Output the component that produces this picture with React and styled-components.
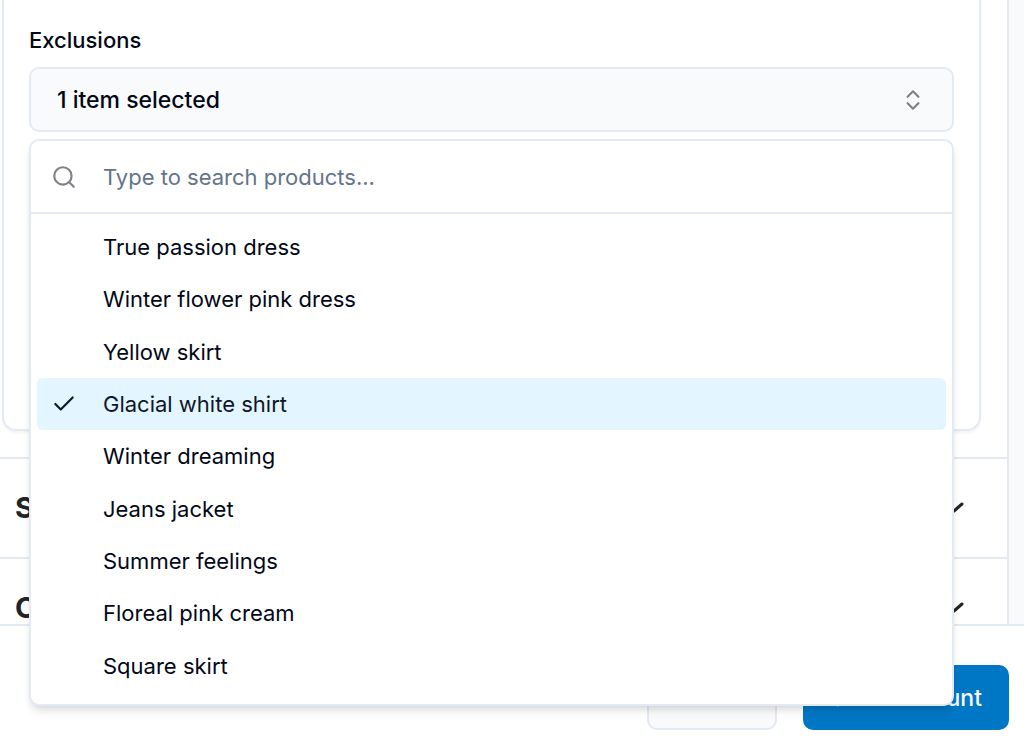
import React, { useState } from "react";
import styled, { createGlobalStyle } from "styled-components";
import { Check, ChevronsUpDown, Search } from "lucide-react";

const line = "#e4eaf2";

const GlobalStyle = createGlobalStyle`
  *, *::before, *::after { box-sizing: border-box; }
  body {
    margin: 0;
    background: #f8fafc;
    color: #020817;
    font: 400 22px/32px Inter, "Liberation Sans", sans-serif;
  }
  button, input { font: inherit; color: inherit; }
`;

const Page = styled.div`
  display: flex;
  flex-direction: column;
  height: 100vh;
  overflow: hidden;
`;

const Content = styled.main`
  flex: 1;
  min-height: 0;
  padding-right: 15px;
`;

const Panel = styled.div`
  background: #fff;
  border-right: 2px solid ${line};
`;

const CardArea = styled.div`
  padding: 0 26px 26px 2px;
`;

const Card = styled.section`
  min-height: 431px;
  padding: 24px 25px;
  border: 2px solid ${line};
  border-top: 0;
  border-radius: 0 0 14px 14px;
  box-shadow: 0 2px 3px rgba(0, 0, 0, 0.05);
`;

const Label = styled.label`
  display: block;
  margin-bottom: 11px;
  font-weight: 500;
`;

const Combobox = styled.div`
  position: relative;
`;

const Trigger = styled.button`
  display: flex;
  align-items: center;
  justify-content: space-between;
  width: 100%;
  height: 65px;
  padding: 0 26px;
  border: 2px solid ${line};
  border-radius: 10px;
  background: #f8fafc;
  font-size: 23px;
  font-weight: 500;
  text-align: left;
  cursor: pointer;

  svg { color: #808288; }
`;

const Popup = styled.div`
  position: absolute;
  z-index: 2;
  top: calc(100% + 7px);
  left: 0;
  right: 0;
  border: 2px solid ${line};
  border-radius: 10px;
  background: #fff;
  box-shadow: 0 7px 10px -2px rgba(0, 0, 0, 0.1), 0 3px 7px -3px rgba(0, 0, 0, 0.1);
`;

const SearchRow = styled.div`
  display: flex;
  align-items: center;
  gap: 26px;
  height: 73px;
  padding: 0 20px;
  border-bottom: 2px solid ${line};

  svg { flex: none; color: #808288; }
`;

const SearchInput = styled.input`
  flex: 1;
  min-width: 0;
  padding: 0;
  border: 0;
  outline: 0;
  background: none;

  &::placeholder { color: #64748b; opacity: 1; }
`;

const OptionList = styled.div`
  display: grid;
  grid-auto-rows: 1fr;
  min-height: 490px;
  padding: 7px 6px 12px;
`;

const Option = styled.button`
  display: grid;
  grid-template-columns: 26px 1fr;
  column-gap: 26px;
  align-items: center;
  padding: 0 14px;
  border: 0;
  border-radius: 6px;
  background: ${(p) => (p.$selected ? "#e3f5fe" : "transparent")};
  color: ${(p) => (p.$selected ? "#0f172a" : "#020817")};
  text-align: left;
  cursor: pointer;

  span { grid-column: 2; }
`;

const AccordionItem = styled.h2`
  margin: 0;
  border-top: 2px solid ${line};
`;

const AccordionButton = styled.button`
  display: flex;
  align-items: center;
  justify-content: space-between;
  width: 100%;
  height: 98px;
  padding: 0 43px 0 15px;
  border: 0;
  background: none;
  color: #212529;
  font-size: 29px;
  font-weight: 700;
  cursor: pointer;
`;

const Footer = styled.footer`
  position: relative;
  z-index: 1;
  display: flex;
  justify-content: flex-end;
  gap: 26px;
  padding: 39px 15px 25px;
  border-top: 2px solid ${line};
  background: #fff;
`;

const ActionButton = styled.button`
  height: 65px;
  padding: 0 25px;
  border: 2px solid ${(p) => (p.$primary ? "#0077c5" : line)};
  border-radius: 10px;
  background: ${(p) => (p.$primary ? "#0077c5" : "#f8fafc")};
  color: ${(p) => (p.$primary ? "#f8fafc" : "#020817")};
  font-size: 23px;
  font-weight: 500;
  cursor: pointer;
`;

const products = [
  "True passion dress",
  "Winter flower pink dress",
  "Yellow skirt",
  "Glacial white shirt",
  "Winter dreaming",
  "Jeans jacket",
  "Summer feelings",
  "Floreal pink cream",
  "Square skirt",
];

const sections = ["Stock", "Cost"];

function Chevron() {
  return (
    <svg width="20" height="12" viewBox="0 0 20 12" fill="none" aria-hidden="true">
      <path d="M2 2l8 7 8-7" stroke="#212529" strokeWidth="3" strokeLinecap="round" strokeLinejoin="round" />
    </svg>
  );
}

export default function App() {
  const [selected, setSelected] = useState("Glacial white shirt");
  const [query, setQuery] = useState("");
  const visible = products.filter((p) => p.toLowerCase().includes(query.toLowerCase()));

  return (
    <Page>
      <GlobalStyle />
      <Content>
        <Panel>
          <CardArea>
            <Card>
              <Label htmlFor="exclusions">Exclusions</Label>
              <Combobox>
                <Trigger id="exclusions" type="button" aria-haspopup="listbox" aria-expanded="true">
                  1 item selected
                  <ChevronsUpDown size={26} />
                </Trigger>
                <Popup>
                  <SearchRow>
                    <Search size={26} />
                    <SearchInput
                      type="text"
                      aria-label="Search products"
                      placeholder="Type to search products..."
                      value={query}
                      onChange={(e) => setQuery(e.target.value)}
                    />
                  </SearchRow>
                  <OptionList role="listbox" aria-label="Products">
                    {visible.map((name) => (
                      <Option
                        key={name}
                        type="button"
                        role="option"
                        aria-selected={name === selected}
                        $selected={name === selected}
                        onClick={() => setSelected(name)}
                      >
                        {name === selected && <Check size={26} />}
                        <span>{name}</span>
                      </Option>
                    ))}
                  </OptionList>
                </Popup>
              </Combobox>
            </Card>
          </CardArea>
          {sections.map((title) => (
            <AccordionItem key={title}>
              <AccordionButton type="button" aria-expanded="false">
                {title}
                <Chevron />
              </AccordionButton>
            </AccordionItem>
          ))}
        </Panel>
      </Content>
      <Footer>
        <ActionButton type="button">Cancel</ActionButton>
        <ActionButton type="button" $primary>Save Account</ActionButton>
      </Footer>
    </Page>
  );
}
